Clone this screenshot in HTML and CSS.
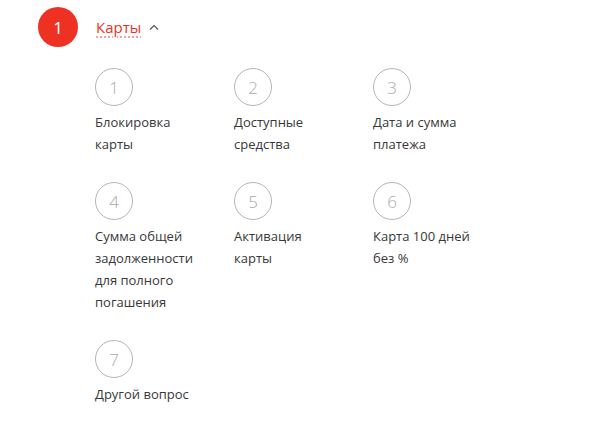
FILE: index.html
```html
<!DOCTYPE html>
<html lang="ru">
<head>
<meta charset="utf-8">
<link rel="stylesheet" href="styles.css">
</head>
<body>
<div class="page">
  <div class="header">
    <div class="step">1</div>
    <span class="title">Карты</span>
    <svg class="chevron" width="10" height="6" viewBox="0 0 10 6"><path d="M1 5.5 L5 1.5 L9 5.5" fill="none" stroke="#555" stroke-width="1.2"/></svg>
  </div>
  <div class="grid">
    <div class="item"><div class="num">1</div><div class="label">Блокировка карты</div></div>
    <div class="item"><div class="num">2</div><div class="label">Доступные средства</div></div>
    <div class="item"><div class="num">3</div><div class="label">Дата и сумма платежа</div></div>
    <div class="item"><div class="num">4</div><div class="label">Сумма общей задолженности для полного погашения</div></div>
    <div class="item"><div class="num">5</div><div class="label">Активация карты</div></div>
    <div class="item"><div class="num">6</div><div class="label">Карта 100 дней без %</div></div>
    <div class="item"><div class="num">7</div><div class="label">Другой вопрос</div></div>
  </div>
</div>
</body>
</html>
```
FILE: styles.css
```css
html, body {
  margin: 0;
  padding: 0;
  background: #fff;
}
body {
  font-family: "Open Sans", "Noto Sans", sans-serif;
  color: #383838;
}
.page {
  padding: 7px 0 0 38px;
}
.header {
  display: flex;
  align-items: center;
  height: 40px;
}
.step {
  width: 40px;
  height: 40px;
  border-radius: 50%;
  background: #ef3124;
  color: #fff;
  font-size: 17px;
  display: flex;
  align-items: center;
  justify-content: center;
  line-height: 1;
}
.title {
  margin-left: 18px;
  color: #ef3124;
  font-size: 15px;
  text-decoration: underline dotted #e08a85;
  text-underline-offset: 4px;
}
.chevron {
  margin-left: 8px;
  margin-top: -1px;
}
.grid {
  margin: 21px 0 0 57px;
  display: grid;
  grid-template-columns: repeat(3, 110px);
  column-gap: 29px;
  row-gap: 27px;
  align-items: start;
}
.item {
  display: flex;
  flex-direction: column;
}
.num {
  width: 36px;
  height: 36px;
  border: 1px solid #b5b5b5;
  border-radius: 50%;
  display: flex;
  align-items: center;
  justify-content: center;
  color: #aaa;
  font-size: 17px;
  font-weight: 300;
}
.label {
  width: 104px;
  margin-top: 5px;
  font-size: 13px;
  line-height: 22px;
}
```
